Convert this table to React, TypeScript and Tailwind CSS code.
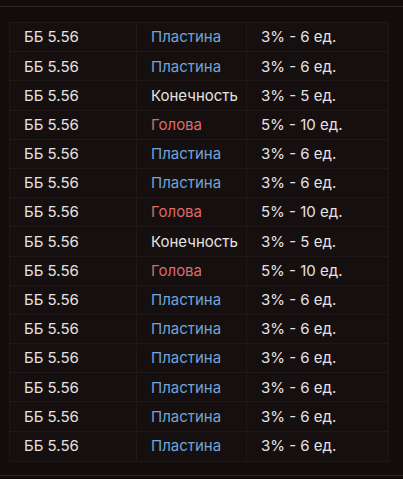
import React from 'react';

type Part = 'plate' | 'limb' | 'head';

const rows: Part[] = [
  'plate', 'plate', 'limb', 'head', 'plate', 'plate', 'head', 'limb',
  'head', 'plate', 'plate', 'plate', 'plate', 'plate', 'plate',
];

const partInfo: Record<Part, { label: string; color: string; value: string }> = {
  plate: { label: 'Пластина', color: 'text-[#6fa5d8]', value: '3% - 6 ед.' },
  limb: { label: 'Конечность', color: 'text-[#e6e2e2]', value: '3% - 5 ед.' },
  head: { label: 'Голова', color: 'text-[#dc6b6b]', value: '5% - 10 ед.' },
};

export default function App() {
  return (
    <div
      className="w-[403px] h-[479px] bg-[#130c0c] overflow-hidden text-[15px] text-[#e6e2e2]"
      style={{ fontFamily: 'Inter, "Noto Sans", sans-serif' }}
    >
      {/* top separator */}
      <div className="h-[7px] border-b border-[#2a2222]" />

      {/* table */}
      <div className="mt-[15px] ml-[9px] w-[380px] border border-[#1f1818] bg-[#160f0f]">
        {rows.map((part, i) => {
          const info = partInfo[part];
          return (
            <div
              key={i}
              className="flex h-[29.2px] items-center pt-[1px] border-b border-[#211919] last:border-b-0"
            >
              <div className="w-[127px] h-full flex items-center pl-[14px] border-r border-[#211919]">
                ББ 5.56
              </div>
              <div className={`w-[110px] h-full flex items-center pl-[14px] border-r border-[#211919] ${info.color}`}>
                {info.label}
              </div>
              <div className="flex-1 h-full flex items-center pl-[14px]">{info.value}</div>
            </div>
          );
        })}
      </div>

      {/* bottom separator */}
      <div className="mt-[13px] border-t border-[#2a2222]" />
    </div>
  );
}
